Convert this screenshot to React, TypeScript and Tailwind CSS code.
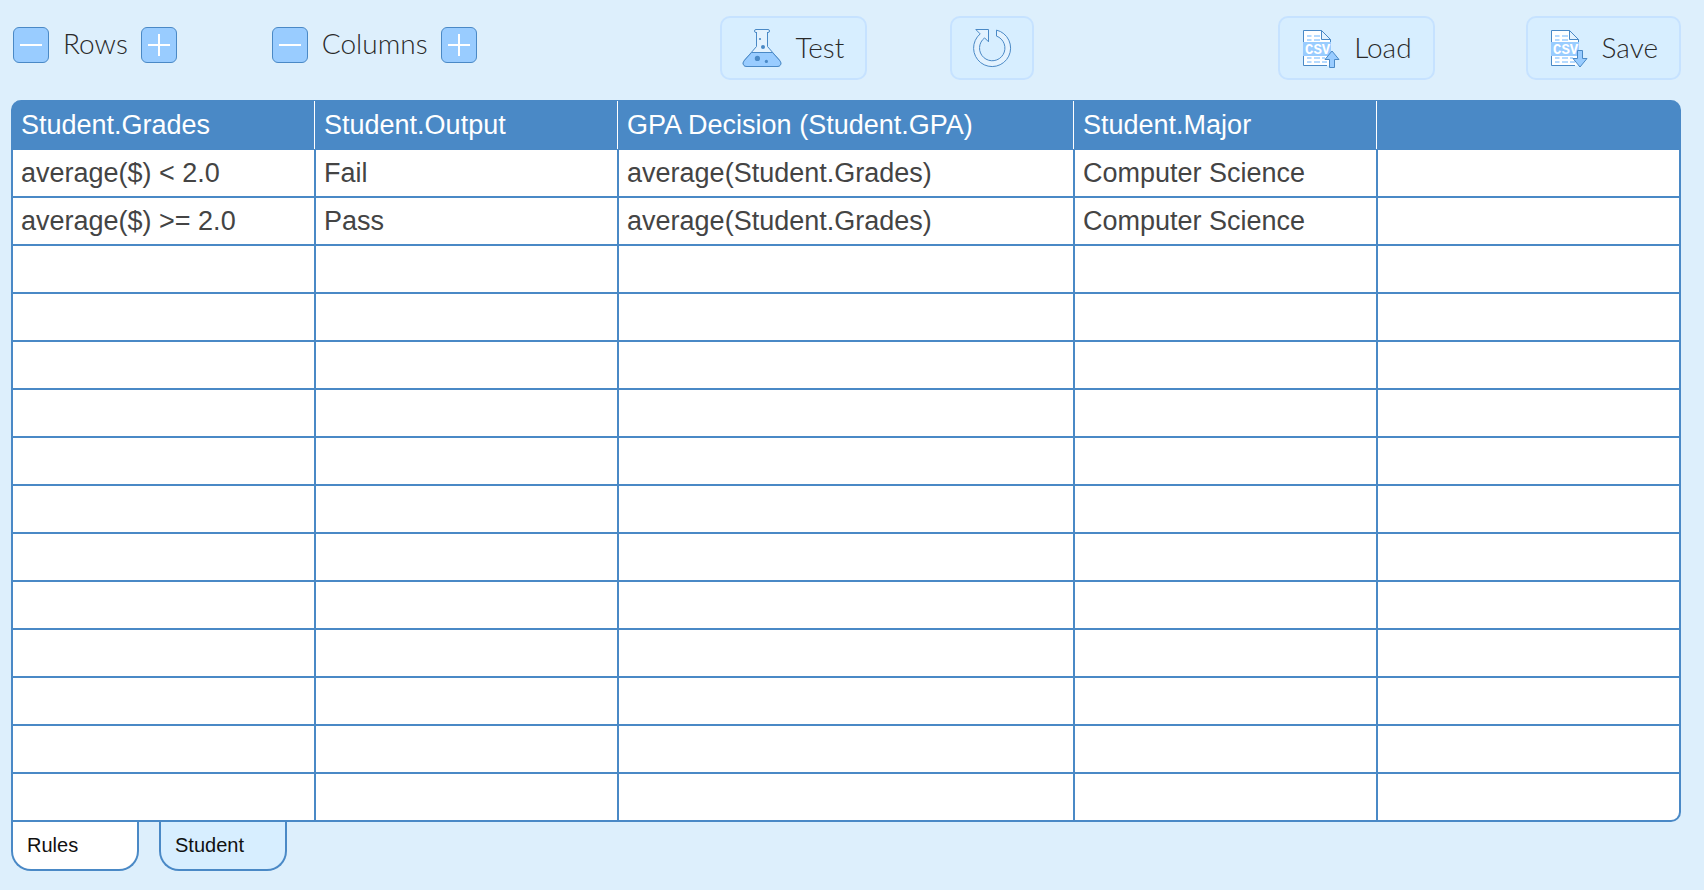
import { useState } from "react";
import type { ReactNode } from "react";

const headers = ["Student.Grades", "Student.Output", "GPA Decision (Student.GPA)", "Student.Major", ""];

const filled = [
  ["average($) < 2.0", "Fail", "average(Student.Grades)", "Computer Science", ""],
  ["average($) >= 2.0", "Pass", "average(Student.Grades)", "Computer Science", ""],
];

const rows = [...filled, ...Array.from({ length: 12 }, () => ["", "", "", "", ""])];

function FlaskIcon() {
  return (
    <svg width="38" height="38" viewBox="0 0 38 38" className="overflow-visible" aria-hidden="true">
      <path
        d="M13.5 3.5V17.5L1.6 31.2C-1.2 34.5 .5 37.5 4 37.5H34C37.5 37.5 39.2 34.5 36.4 31.2L24.5 17.5V3.5"
        fill="#e3f2fe"
        stroke="#4a89c6"
      />
      <path
        d="M8.5 23.5H29.5L36.4 31.2C39.2 34.5 37.5 37.5 34 37.5H4C.5 37.5-1.2 34.5 1.6 31.2Z"
        fill="#99ccff"
        stroke="#4a89c6"
      />
      <rect x="11.5" y=".5" width="15" height="3" rx="1.5" fill="#e3f2fe" stroke="#4a89c6" />
      <path d="M14 3.5H24" stroke="#e3f2fe" />
      <circle cx="17" cy="10" r="1.1" fill="#4a89c6" />
      <circle cx="20" cy="18" r="2" fill="#4a89c6" />
      <circle cx="14.4" cy="29.4" r="2.6" fill="#4a89c6" />
      <circle cx="23.4" cy="32.4" r="1.6" fill="#4a89c6" />
    </svg>
  );
}

function ResetIcon() {
  return (
    <svg width="38" height="38" viewBox="0 0 38 38" className="overflow-visible" aria-hidden="true">
      <path
        d="M23.5 1.1A18.5 18.5 0 1 1 7.2 4.9L2.8 .5H15.5V12.8L11.6 8.9A12.7 12.7 0 1 0 23.5 7.1Z"
        fill="#e3f2fe"
        stroke="#4a89c6"
      />
    </svg>
  );
}

function CsvIcon({ direction }: { direction: "up" | "down" }) {
  return (
    <svg width="39" height="38" viewBox="0 0 39 38" className="overflow-visible" aria-hidden="true">
      <path d="M2.5 1.5H20.5L29.5 10.5V36.5H2.5Z" fill="#fff" />
      <path d="M26 36.5H2.5V1.5H20.5L29.5 10.5V24" fill="none" stroke="#4a89c6" />
      <path d="M20.5 1.5V10.5H29.5Z" fill="#e3f2fe" stroke="#4a89c6" />
      <path
        d="M6 7H10.5M13 7H19M6 11H10.5M13 11H19M6 29H10.5M13 29H19M21 29H24M6 33H10.5M13 33H19M21 33H26"
        stroke="#b5daff"
        strokeWidth="2"
      />
      <path d="M2 13H30V27H2Z" fill="#99ccff" />
      <text x="4" y="25" fontSize="14" fill="#fff" className="font-['Liberation_Mono',monospace] font-bold">
        CSV
      </text>
      {direction === "up" ? (
        <path d="M31 22L38 30.5H33.5V38.5H28.5V30.5H24Z" fill="#99ccff" stroke="#4a89c6" />
      ) : (
        <path d="M28.5 21.5H33.5V29.5H38L31 38L24 29.5H28.5Z" fill="#99ccff" stroke="#4a89c6" />
      )}
    </svg>
  );
}

function StepButton({ label, plus }: { label: string; plus?: boolean }) {
  return (
    <button
      type="button"
      aria-label={label}
      className="flex size-9 items-center justify-center rounded-md border border-[#4a89c6] bg-[#99ccff]"
    >
      <svg width="22" height="22" viewBox="0 0 22 22" aria-hidden="true">
        <path d={plus ? "M0 11H22M11 0V22" : "M0 11H22"} stroke="#fff" strokeWidth="2" />
      </svg>
    </button>
  );
}

function Stepper({ label }: { label: string }) {
  return (
    <div className="flex items-center gap-[13px]">
      <StepButton label={`Remove ${label.toLowerCase()}`} />
      <span className="pb-1 pl-px">{label}</span>
      <StepButton label={`Add ${label.toLowerCase()}`} plus />
    </div>
  );
}

function ToolButton({ icon, text, label }: { icon: ReactNode; text?: string; label?: string }) {
  return (
    <button
      type="button"
      aria-label={label}
      className="flex h-16 items-center gap-[14px] rounded-[10px] border-2 border-[#c6e2ff] bg-[#d7eeff] px-[21px]"
    >
      {icon}
      {text && <span className="pb-0.5">{text}</span>}
    </button>
  );
}

export default function App() {
  const [tab, setTab] = useState("Rules");

  return (
    <main className="min-h-screen bg-[#ddeffc] pr-[23px] pb-4 pl-[11px] font-['Liberation_Sans',Arial,sans-serif]">
      <div className="flex justify-between pt-4 pb-5 pl-0.5 font-['Lato',sans-serif] text-[28px] leading-9 font-light text-[#2a2a2a]">
        <div className="flex items-center gap-[95px] pb-1.5">
          <Stepper label="Rows" />
          <Stepper label="Columns" />
        </div>
        <div className="flex gap-[83px]">
          <ToolButton icon={<FlaskIcon />} text="Test" />
          <ToolButton icon={<ResetIcon />} label="Reset" />
        </div>
        <div className="flex gap-[91px]">
          <ToolButton icon={<CsvIcon direction="up" />} text="Load" />
          <ToolButton icon={<CsvIcon direction="down" />} text="Save" />
        </div>
      </div>

      <div className="overflow-hidden rounded-t-[10px] rounded-br-[10px] border-2 border-t-0 border-[#4a89c6] bg-[#4a89c6]">
        <table className="w-full table-fixed border-separate border-spacing-0 text-left text-[27px] leading-8">
          <colgroup>
            <col className="w-[18.19%]" />
            <col className="w-[18.19%]" />
            <col className="w-[27.37%]" />
            <col className="w-[18.19%]" />
            <col />
          </colgroup>
          <thead>
            <tr>
              {headers.map((h, i) => (
                <th key={i} scope="col" className="group p-0 py-px pr-px font-normal text-white">
                  <div className="h-12 border-r border-white py-2 pl-2 group-last:border-transparent">{h}</div>
                </th>
              ))}
            </tr>
          </thead>
          <tbody className="text-[#444]">
            {rows.map((row, r) => (
              <tr key={r} className="group">
                {row.map((cell, c) => (
                  <td
                    key={c}
                    className="h-12 border-r-2 border-b-2 border-[#4a89c6] bg-white p-0 pl-2 group-last:h-[46px] group-last:border-b-0 last:border-r-0"
                  >
                    {cell}
                  </td>
                ))}
              </tr>
            ))}
          </tbody>
        </table>
      </div>

      <div className="flex gap-5 text-xl leading-6 text-[#111]" role="tablist">
        {["Rules", "Student"].map((name) => (
          <button
            key={name}
            type="button"
            role="tab"
            aria-selected={tab === name}
            onClick={() => setTab(name)}
            className={`h-[49px] w-32 rounded-b-[20px] border-2 border-t-0 border-[#4a89c6] pb-0.5 pl-[14px] text-left ${
              tab === name ? "bg-white" : "bg-[#d7eeff]"
            }`}
          >
            {name}
          </button>
        ))}
      </div>
    </main>
  );
}
